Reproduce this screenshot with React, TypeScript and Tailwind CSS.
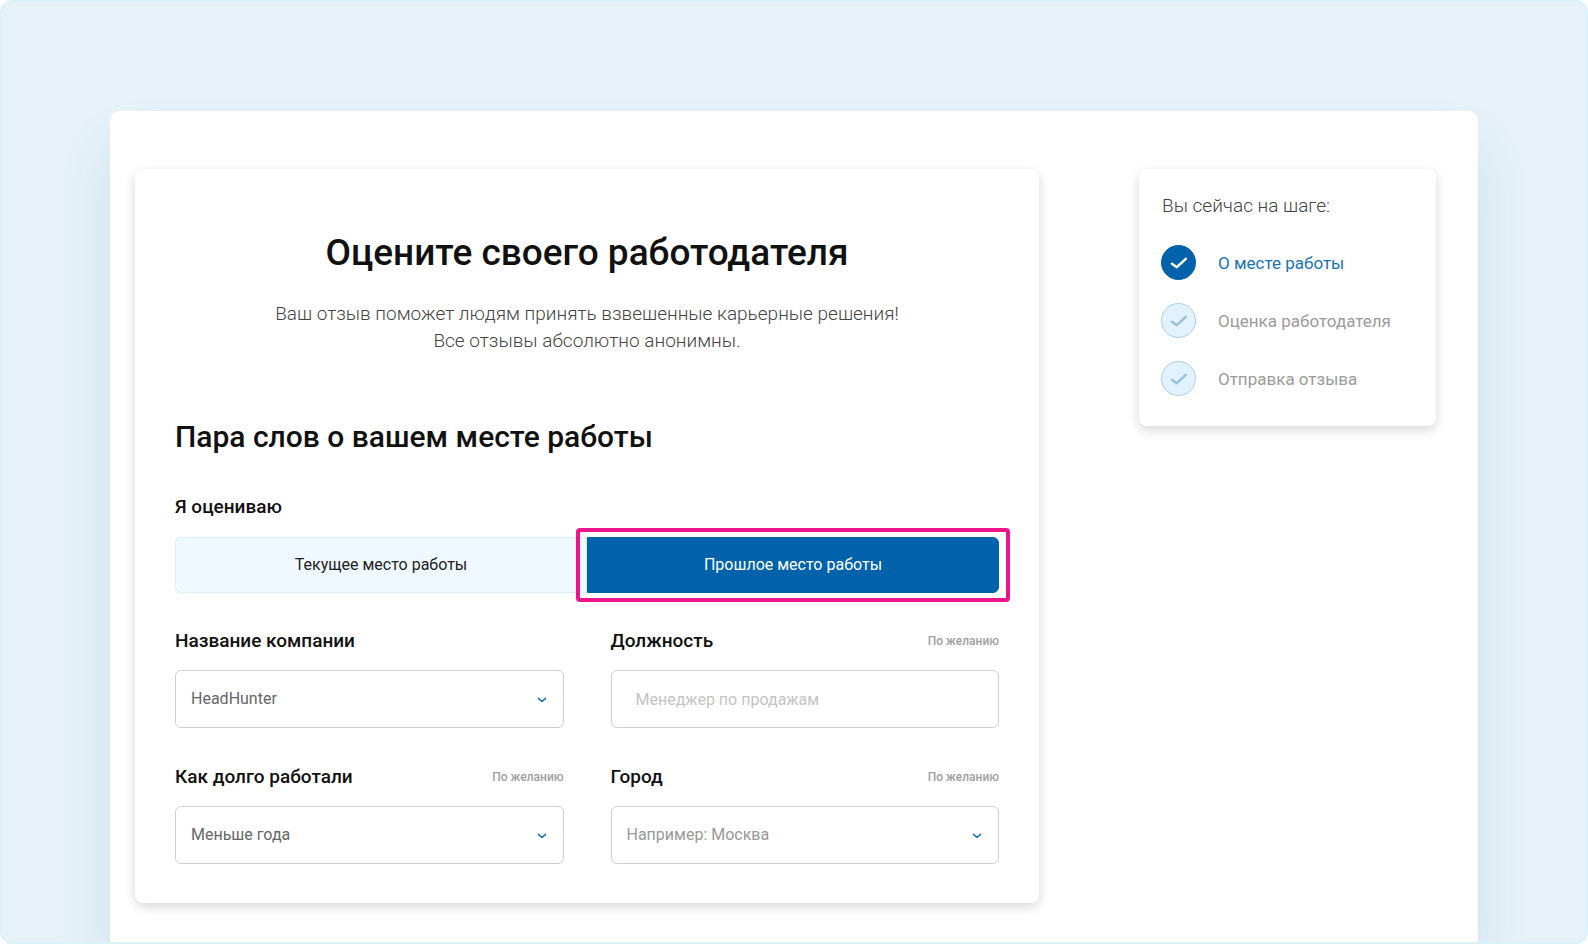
import { useState } from "react";
import type { ReactNode } from "react";
import clsx from "clsx";

interface FieldProps {
  id: string;
  label: string;
  optional?: boolean;
  children: ReactNode;
}

interface SelectProps {
  id: string;
  options: string[];
  placeholder?: string;
  initial?: string;
}

const STEPS = ["О месте работы", "Оценка работодателя", "Отправка отзыва"];

const PLACES = [
  { id: "current", label: "Текущее место работы" },
  { id: "past", label: "Прошлое место работы" },
];

function CheckIcon() {
  return (
    <svg
      viewBox="0 0 18 14"
      className="h-[14px] w-[18px]"
      fill="none"
      stroke="currentColor"
      strokeWidth="2.5"
      strokeLinecap="round"
      strokeLinejoin="round"
      aria-hidden="true"
    >
      <path d="M1.9 7.7 6.8 11.2 15.8 2.8" />
    </svg>
  );
}

function Chevron() {
  return (
    <svg
      viewBox="0 0 10 6"
      className="pointer-events-none absolute right-[17px] top-[27px] h-[6px] w-[10px] text-[#1a73b9]"
      fill="none"
      stroke="currentColor"
      strokeWidth="1.5"
      strokeLinecap="round"
      strokeLinejoin="round"
      aria-hidden="true"
    >
      <path d="M1.4 1.4 5 4.4 8.6 1.4" />
    </svg>
  );
}

function Field({ id, label, optional, children }: FieldProps) {
  return (
    <div>
      <div className="mb-[15px] flex h-7 items-center justify-between">
        <label htmlFor={id} className="text-[19px] font-medium text-[#111]">
          {label}
        </label>

        {optional && (
          <span className="text-xs font-medium text-[#a0a0a0]">По желанию</span>
        )}
      </div>

      {children}
    </div>
  );
}

function Select({ id, options, placeholder, initial = "" }: SelectProps) {
  const [value, setValue] = useState(initial);

  return (
    <div className="relative">
      <select
        id={id}
        value={value}
        onChange={(e) => setValue(e.target.value)}
        className={clsx(
          "block h-[58px] w-full appearance-none rounded-md border border-[#cfcfcf] bg-white pl-[15px] pr-10 text-base",
          value ? "text-[#666]" : "text-[#999]"
        )}
      >
        {placeholder && <option value="">{placeholder}</option>}
        {options.map((option) => (
          <option key={option} value={option}>
            {option}
          </option>
        ))}
      </select>
      <Chevron />
    </div>
  );
}

function Steps() {
  return (
    <aside className="w-[297px] shrink-0 rounded-lg bg-white px-[22px] pb-[30px] pt-[25px] shadow-[0_4px_12px_rgba(0,0,0,0.16)]">
      <p className="pl-px text-[19px] font-light leading-6 text-[#444]">
        Вы сейчас на шаге:
      </p>

      <ol className="mt-[27px] flex flex-col gap-[23px]">
        {STEPS.map((step, index) => (
          <li key={step} className="flex items-center gap-[22px]">
            <span
              className={clsx(
                "flex size-[35px] items-center justify-center rounded-full border",
                index === 0
                  ? "border-[#0062aa] bg-[#0062aa] text-white"
                  : "border-[#a9cde6] bg-[#e2f3ff] text-[#99c0dd]"
              )}
            >
              <CheckIcon />
            </span>
            <span
              className={clsx(
                "text-[17px] leading-6",
                index === 0 ? "text-[#1a73b5]" : "text-[#9b9b9b]"
              )}
            >
              {step}
            </span>
          </li>
        ))}
      </ol>
    </aside>
  );
}

export default function App() {
  const [place, setPlace] = useState("past");
  const [position, setPosition] = useState("");

  return (
    <div className="bg-white font-['Roboto',sans-serif]">
      <div className="flex min-h-screen flex-col overflow-hidden rounded-xl border-2 border-[#dcf2f9] bg-[#e6f2f8] px-[108px] pt-[109px]">
        <main className="flex flex-1 items-start justify-between rounded-t-[10px] bg-white pb-9 pl-[25px] pr-[42px] pt-[58px] shadow-[0_36px_56px_rgba(0,80,160,0.1)]">
          <form
            className="mr-[100px] flex-1 rounded-lg bg-white px-10 pb-[39px] pt-[60px] shadow-[0_4px_12px_rgba(0,0,0,0.16)]"
            onSubmit={(e) => e.preventDefault()}
          >
            <h1 className="text-center text-[37px] font-medium leading-[48px] text-[#111]">
              Оцените своего работодателя
            </h1>

            <p className="mt-[23px] text-center text-[19px] font-light leading-[27px] text-[#444]">
              Ваш отзыв поможет людям принять взвешенные карьерные решения!
              <br />
              Все отзывы абсолютно анонимны.
            </p>

            <h2 className="mt-[63px] text-[30px] font-medium leading-10 text-[#111]">
              Пара слов о вашем месте работы
            </h2>

            <h3
              id="place-label"
              className="mt-9 text-[19px] font-medium leading-7 text-[#111]"
            >
              Я оцениваю
            </h3>

            <div
              role="group"
              aria-labelledby="place-label"
              className="mt-4 flex rounded-md"
            >
              {PLACES.map(({ id, label }) => (
                <div key={id} className="relative flex-1">
                  <button
                    type="button"
                    aria-pressed={place === id}
                    onClick={() => setPlace(id)}
                    className={clsx(
                      "h-14 w-full border text-base",
                      id === "current" ? "rounded-l-md" : "rounded-r-md",
                      place === id
                        ? "border-[#0062aa] bg-[#0062aa] text-white"
                        : "border-[#d8effd] bg-[#f0f8ff] text-[#222]"
                    )}
                  >
                    {label}
                  </button>
                  {place === id && (
                    <span className="pointer-events-none absolute -inset-x-[11px] -inset-y-[9px] rounded-[4px] border-4 border-[#ee148c]" />
                  )}
                </div>
              ))}
            </div>

            <div className="mt-[34px] grid grid-cols-2 gap-x-[47px] gap-y-[35px]">
              <Field id="company" label="Название компании">
                <Select
                  id="company"
                  options={["HeadHunter"]}
                  initial="HeadHunter"
                />
              </Field>

              <Field id="position" label="Должность" optional>
                <input
                  id="position"
                  value={position}
                  onChange={(e) => setPosition(e.target.value)}
                  placeholder="Менеджер по продажам"
                  className="block h-[58px] w-full rounded-md border border-[#cfcfcf] px-6 text-base text-[#666] placeholder:text-[#c4c4c4]"
                />
              </Field>

              <Field id="duration" label="Как долго работали" optional>
                <Select
                  id="duration"
                  options={["Меньше года"]}
                  initial="Меньше года"
                />
              </Field>

              <Field id="city" label="Город" optional>
                <Select
                  id="city"
                  options={["Москва"]}
                  placeholder="Например: Москва"
                />
              </Field>
            </div>
          </form>

          <Steps />
        </main>
      </div>
    </div>
  );
}
